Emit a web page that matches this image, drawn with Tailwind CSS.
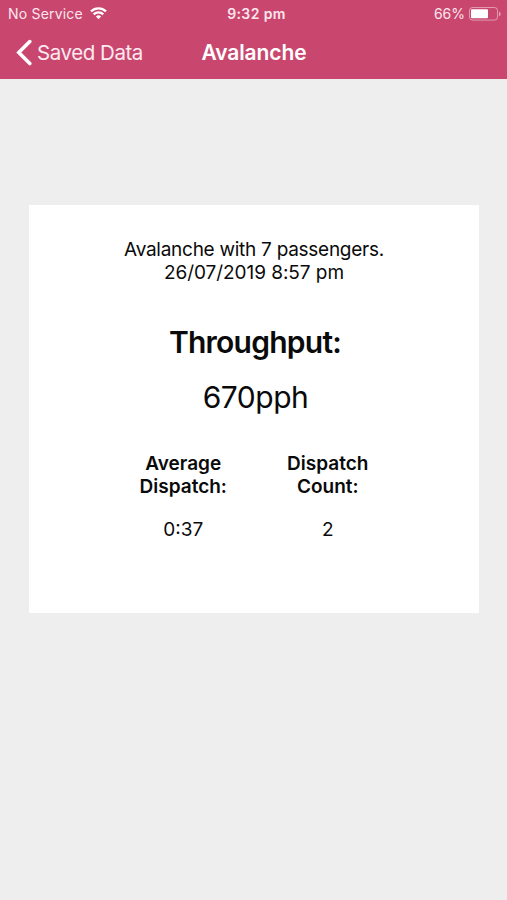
<!DOCTYPE html>
<html lang="en">
  <head>
    <meta charset="UTF-8" />
    <meta name="viewport" content="width=device-width, initial-scale=1.0" />
    <title>Avalanche</title>
    <script src="https://cdn.jsdelivr.net/npm/@tailwindcss/browser@4"></script>
  </head>
  <body class="min-h-screen bg-[#eeeeee] font-['Inter',sans-serif] text-[#0a0a0a]">
    <header class="h-[79px] bg-[#c9476f] text-white">
      <!-- Status bar -->
      <div class="grid h-[27px] grid-cols-[1fr_auto_1fr] items-center pr-1.5 pl-2 text-[14px] text-[#fce6ee]">
        <div class="flex items-center gap-[7px]">
          <span class="tracking-[0.2px] whitespace-nowrap">No Service</span>
          <svg class="h-[13px] w-[17px]" viewBox="0 0 17 13" fill="none" stroke="white" stroke-width="2.3">
            <path d="M1 4.4a10.6 10.6 0 0 1 15 0M3.7 7.4a6.8 6.8 0 0 1 9.6 0" />
            <path d="M8.5 12.2 5.9 9.6a3.7 3.7 0 0 1 5.2 0z" fill="white" stroke="none" />
          </svg>
        </div>
        <div class="pl-1 text-center font-semibold tracking-[0.4px]">9:32 pm</div>
        <div class="flex items-center justify-end gap-1">
          <span>66%</span>
          <svg class="h-[14px] w-[32px]" viewBox="0 0 32 14" fill="none">
            <rect x="0.5" y="0.5" width="28" height="12.6" rx="3" stroke="white" stroke-opacity="0.45" />
            <rect x="2" y="2.2" width="17" height="9" rx="1" fill="white" />
            <path d="M30 4.5a2.7 2.7 0 0 1 0 5z" fill="white" fill-opacity="0.5" />
          </svg>
        </div>
      </div>

      <!-- Navigation bar -->
      <nav class="grid h-[51px] grid-cols-3 items-center px-4">
        <a href="#" class="flex items-center gap-[5px] text-[20.5px] tracking-[-0.45px] whitespace-nowrap text-[#fdeaf1]">
          <svg class="h-[28px] w-[16px]" viewBox="0 0 16 28" fill="none" stroke="white" stroke-width="3.6" stroke-linecap="round">
            <path d="M13.8 2.6 2.8 13.6l11 11" />
          </svg>
          <span class="pt-px">Saved Data</span>
        </a>
        <h1 class="pt-px pl-px text-center text-[21px] font-semibold tracking-[-0.1px]">Avalanche</h1>
      </nav>
    </header>

    <main class="mr-[28px] ml-[29px] mt-[126px] h-[408px] bg-white pt-[33px] text-center">
      <p class="text-[19px] leading-[23px] tracking-[-0.27px]">Avalanche with 7 passengers.<br /><span class="tracking-[-0.05px]">26/07/2019 8:57 pm</span></p>
      <h2 class="mt-[34px] pl-0.5 text-[30px] leading-[48px] font-semibold tracking-[-0.75px]">Throughput:</h2>
      <p class="mt-[7px] pl-[3px] text-[30px] leading-[48px] tracking-[-0.5px]">670pph</p>

      <div class="ml-[82px] mt-[31px] grid w-[289px] grid-cols-2 text-[19px] leading-[23px]">
        <div>
          <h3 class="font-semibold">Average<br />Dispatch:</h3>
          <p class="mt-5">0:37</p>
        </div>
        <div>
          <h3 class="font-semibold">Dispatch<br />Count:</h3>
          <p class="mt-5">2</p>
        </div>
      </div>
    </main>
  </body>
</html>
